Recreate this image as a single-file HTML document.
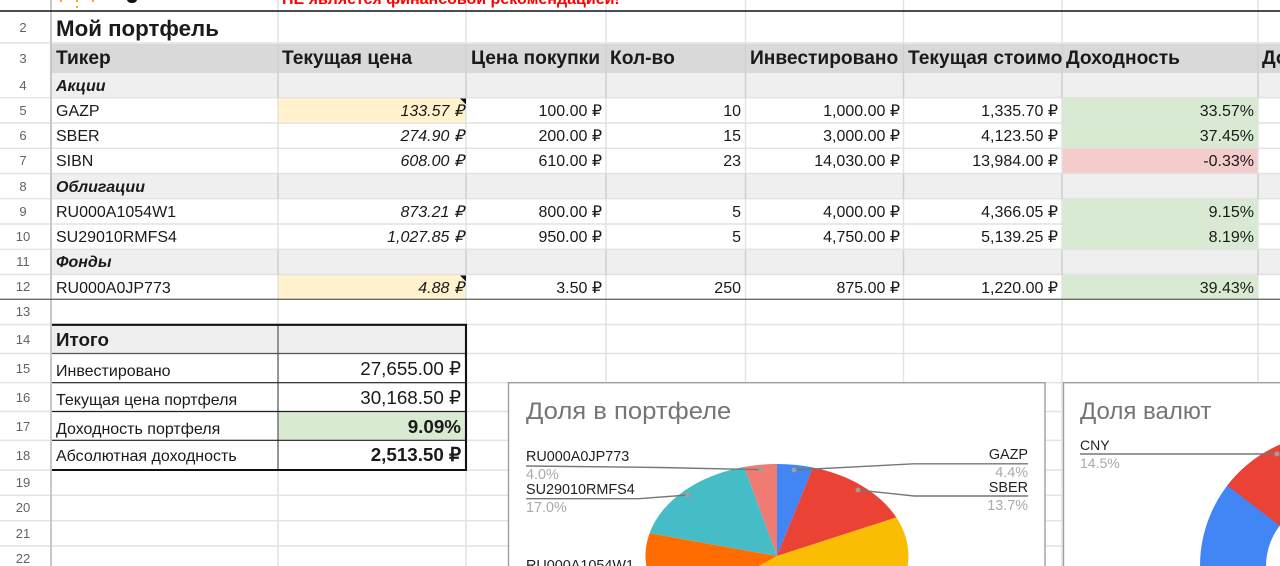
<!DOCTYPE html>
<html lang="ru"><head><meta charset="utf-8"><title>Мой портфель</title>
<style>
html,body{margin:0;padding:0;background:#fff;overflow:hidden}
#p{position:relative;width:1280px;height:566px;overflow:hidden;background:#fff;font-family:"Liberation Sans",sans-serif;color:#1a1a1a}
svg.bg{position:absolute;left:0;top:0}
.t,.r,.n{position:absolute;white-space:nowrap;font-size:16px;line-height:20px}
.r{text-align:right}
.i{font-style:italic}
.b{font-weight:bold}
.h{font-size:19.2px;font-weight:bold;line-height:24px;top:47px}
.n{font-size:13px;color:#5f6368;width:46px;left:0;text-align:center}
.c{font-size:14.4px;line-height:16px;color:#222}
.g{font-size:14.4px;line-height:16px;color:#aaa}
.s{font-size:18.8px;line-height:24px}
</style></head><body><div id="p">
<svg class="bg" width="1280" height="566" viewBox="0 0 1280 566" shape-rendering="auto">
<!-- fills -->
<rect x="52" y="44" width="1228" height="29" fill="#d9d9d9"/>
<rect x="52" y="73" width="1228" height="25" fill="#efefef"/>
<rect x="52" y="174" width="1228" height="25" fill="#efefef"/>
<rect x="52" y="250" width="1228" height="25" fill="#efefef"/>
<rect x="52" y="325" width="414" height="28" fill="#efefef"/>
<rect x="278" y="98" width="188" height="25" fill="#fff2cc"/>
<rect x="278" y="275" width="188" height="24" fill="#fff2cc"/>
<rect x="1062" y="98" width="196" height="50" fill="#d9ead3"/>
<rect x="1062" y="148" width="196" height="25" fill="#f4cccc"/>
<rect x="1062" y="199" width="196" height="50" fill="#d9ead3"/>
<rect x="1062" y="275" width="196" height="24" fill="#d9ead3"/>
<rect x="278" y="412" width="188" height="28" fill="#d9ead3"/>
<!-- grid horizontal -->
<g stroke="#e2e2e2" stroke-width="1.4">
<path d="M0 43H1280M0 97.7H1280M0 123H1280M0 148.3H1280M0 173.5H1280M0 198.7H1280M0 224H1280M0 249.3H1280M0 274.5H1280M0 324.5H1280M0 353.5H1280M0 382.7H1280M0 411.5H1280M0 440.3H1280M0 470H1280M0 495.3H1280M0 520.7H1280M0 546H1280"/>
</g>
<!-- grid vertical -->
<g stroke="#e2e2e2" stroke-width="1.4">
<path d="M278 0V566M466 0V566M606 0V566M745.5 0V566M903.5 0V566M1062 0V566M1258 0V566"/>
</g>
<g stroke="#cfcfcf" stroke-width="1.4"><path d="M278 44V98M466 44V98M606 44V98M745.5 44V98M903.5 44V98M1062 44V98M1258 44V98M278 174V199M466 174V199M606 174V199M745.5 174V199M903.5 174V199M1062 174V199M1258 174V199M278 250V275M466 250V275M606 250V275M745.5 250V275M903.5 250V275M1062 250V275M1258 250V275"/></g>
<path d="M51 0V566" stroke="#c8c8c8" stroke-width="2"/>
<path d="M0 11H1280" stroke="#111" stroke-width="1.5"/>
<path d="M0 299.3H1280" stroke="#6a6a6a" stroke-width="1.3"/>
<!-- totals table -->
<path d="M278 325V469" stroke="#777" stroke-width="1.5"/>
<path d="M52 353.5H466" stroke="#555" stroke-width="1.3"/>
<path d="M52 382.7H466M52 411.5H466M52 440.3H466" stroke="#222" stroke-width="1.2"/>
<path d="M52 324.8H466V470H52" fill="none" stroke="#111" stroke-width="2.1"/>
<!-- note triangles -->
<path d="M460 98.5H466V104.5Z" fill="#111"/><path d="M460 275.5H466V281.5Z" fill="#111"/>
<!-- top clipped logo -->
<g fill="#f9ab00"><rect x="60" y="0" width="2" height="2"/><rect x="76" y="0" width="2" height="2"/><rect x="76" y="6" width="2" height="2"/><rect x="92" y="0" width="2" height="2"/></g>
<path d="M127 0h10q-1 3-5 3t-5-3z" fill="#111"/>
<!-- chart 1 -->
<rect x="508.5" y="382.7" width="536.5" height="200" fill="#fff" stroke="#9e9e9e" stroke-width="1.4"/>
<path d="M777 556L777 464A131.5 92 0 0 1 812.9 467.5Z" fill="#4285f4"/>
<path d="M777 556L812.9 467.5A131.5 92 0 0 1 896.3 517.4Z" fill="#ea4335"/>
<path d="M777 556L896.3 517.4A131.5 92 0 0 1 673.6 612.9Z" fill="#fbbc04"/>
<path d="M777 556L673.6 612.9A131.5 92 0 0 1 649.6 533.1Z" fill="#ff6d01"/>
<path d="M777 556L649.6 533.1A131.5 92 0 0 1 744.3 466.9Z" fill="#46bdc6"/>
<path d="M777 556L744.3 466.9A131.5 92 0 0 1 777 464Z" fill="#f07b72"/>
<g fill="none" stroke="#777" stroke-width="1.4">
<path d="M794 470L914 463.8H1028"/>
<path d="M858 490L914 496H1028"/>
<path d="M526 466L660 467.5L761 469.7"/>
<path d="M526 498.7H639L688 495"/>
</g>
<!-- chart 2 -->
<rect x="1063.5" y="382.7" width="400" height="200" fill="#fff" stroke="#9e9e9e" stroke-width="1.4"/>
<circle cx="1332" cy="566" r="99" fill="none" stroke="#4285f4" stroke-width="66"/>
<path d="M1227.3 485.5A132 132 0 0 1 1332 434V500A66 66 0 0 0 1279.7 525.7Z" fill="#ea4335"/>
<path d="M1080 454H1277" fill="none" stroke="#777" stroke-width="1.4"/>
<g fill="#9e9e9e"><circle cx="794" cy="470" r="2.5"/><circle cx="858" cy="490" r="2.5"/><circle cx="761" cy="469.7" r="2.5"/><circle cx="688" cy="495" r="2.5"/><circle cx="1277" cy="454" r="2.5"/></g>
</svg>

<div class="t b" style="left:282px;top:-10px;color:#f00;font-size:16px">НЕ является финансовой рекомендацией!</div>

<div class="n" style="top:18px">2</div><div class="n" style="top:49px">3</div><div class="n" style="top:76px">4</div><div class="n" style="top:101px">5</div><div class="n" style="top:126px">6</div><div class="n" style="top:151px">7</div><div class="n" style="top:177px">8</div><div class="n" style="top:202px">9</div><div class="n" style="top:227px">10</div><div class="n" style="top:252px">11</div><div class="n" style="top:277px">12</div><div class="n" style="top:302px">13</div><div class="n" style="top:330px">14</div><div class="n" style="top:359px">15</div><div class="n" style="top:388px">16</div><div class="n" style="top:417px">17</div><div class="n" style="top:446px">18</div><div class="n" style="top:473px">19</div><div class="n" style="top:498px">20</div><div class="n" style="top:524px">21</div><div class="n" style="top:549px">22</div>

<div class="t b" style="left:56px;top:16px;font-size:22.3px;line-height:26px">Мой портфель</div>

<div class="t h" style="left:56px">Тикер</div>
<div class="t h" style="left:282px">Текущая цена</div>
<div class="t h" style="left:471px">Цена покупки</div>
<div class="t h" style="left:610px">Кол-во</div>
<div class="t h" style="left:750px">Инвестировано</div>
<div class="t h" style="left:908px;width:154px;overflow:hidden">Текущая стоимость</div>
<div class="t h" style="left:1066px">Доходность</div>
<div class="t h" style="left:1262px">Доля</div>

<div class="t i b" style="left:56px;top:77px">Акции</div>
<div class="t i b" style="left:56px;top:178px">Облигации</div>
<div class="t i b" style="left:56px;top:253px">Фонды</div>

<div class="t" style="left:56px;top:102px">GAZP</div>
<div class="t" style="left:56px;top:127px">SBER</div>
<div class="t" style="left:56px;top:152px">SIBN</div>
<div class="t" style="left:56px;top:203px">RU000A1054W1</div>
<div class="t" style="left:56px;top:228px">SU29010RMFS4</div>
<div class="t" style="left:56px;top:279px">RU000A0JP773</div>

<div class="r i" style="right:816px;top:102px">133.57 ₽</div>
<div class="r i" style="right:816px;top:127px">274.90 ₽</div>
<div class="r i" style="right:816px;top:152px">608.00 ₽</div>
<div class="r i" style="right:816px;top:203px">873.21 ₽</div>
<div class="r i" style="right:816px;top:228px">1,027.85 ₽</div>
<div class="r i" style="right:816px;top:279px">4.88 ₽</div>

<div class="r" style="right:678px;top:102px">100.00 ₽</div>
<div class="r" style="right:678px;top:127px">200.00 ₽</div>
<div class="r" style="right:678px;top:152px">610.00 ₽</div>
<div class="r" style="right:678px;top:203px">800.00 ₽</div>
<div class="r" style="right:678px;top:228px">950.00 ₽</div>
<div class="r" style="right:678px;top:279px">3.50 ₽</div>

<div class="r" style="right:539px;top:102px">10</div>
<div class="r" style="right:539px;top:127px">15</div>
<div class="r" style="right:539px;top:152px">23</div>
<div class="r" style="right:539px;top:203px">5</div>
<div class="r" style="right:539px;top:228px">5</div>
<div class="r" style="right:539px;top:279px">250</div>

<div class="r" style="right:380px;top:102px">1,000.00 ₽</div>
<div class="r" style="right:380px;top:127px">3,000.00 ₽</div>
<div class="r" style="right:380px;top:152px">14,030.00 ₽</div>
<div class="r" style="right:380px;top:203px">4,000.00 ₽</div>
<div class="r" style="right:380px;top:228px">4,750.00 ₽</div>
<div class="r" style="right:380px;top:279px">875.00 ₽</div>

<div class="r" style="right:222px;top:102px">1,335.70 ₽</div>
<div class="r" style="right:222px;top:127px">4,123.50 ₽</div>
<div class="r" style="right:222px;top:152px">13,984.00 ₽</div>
<div class="r" style="right:222px;top:203px">4,366.05 ₽</div>
<div class="r" style="right:222px;top:228px">5,139.25 ₽</div>
<div class="r" style="right:222px;top:279px">1,220.00 ₽</div>

<div class="r" style="right:26px;top:102px">33.57%</div>
<div class="r" style="right:26px;top:127px">37.45%</div>
<div class="r" style="right:26px;top:152px">-0.33%</div>
<div class="r" style="right:26px;top:203px">9.15%</div>
<div class="r" style="right:26px;top:228px">8.19%</div>
<div class="r" style="right:26px;top:279px">39.43%</div>

<div class="t b s" style="left:56px;top:328px">Итого</div>
<div class="t" style="left:56px;top:362px">Инвестировано</div>
<div class="t" style="left:56px;top:391px">Текущая цена портфеля</div>
<div class="t" style="left:56px;top:420px">Доходность портфеля</div>
<div class="t" style="left:56px;top:447px">Абсолютная доходность</div>
<div class="r s" style="right:819px;top:357px">27,655.00 ₽</div>
<div class="r s" style="right:819px;top:386px">30,168.50 ₽</div>
<div class="r s b" style="right:819px;top:415px">9.09%</div>
<div class="r s b" style="right:819px;top:443px">2,513.50 ₽</div>

<div class="t" style="left:526px;top:398px;font-size:24px;line-height:28px;color:#757575;transform:scaleX(1.068);transform-origin:0 0">Доля в портфеле</div>
<div class="t c" style="left:526px;top:449px">RU000A0JP773</div>
<div class="t g" style="left:526px;top:467px">4.0%</div>
<div class="t c" style="left:526px;top:482px">SU29010RMFS4</div>
<div class="t g" style="left:526px;top:500px">17.0%</div>
<div class="t c" style="left:526px;top:558px">RU000A1054W1</div>
<div class="r c" style="right:252px;top:447px">GAZP</div>
<div class="r g" style="right:252px;top:465px">4.4%</div>
<div class="r c" style="right:252px;top:480px">SBER</div>
<div class="r g" style="right:252px;top:498px">13.7%</div>
<div class="t" style="left:1080px;top:398px;font-size:24px;line-height:28px;color:#757575">Доля валют</div>
<div class="t c" style="left:1080px;top:437px;font-size:14px">CNY</div>
<div class="t g" style="left:1080px;top:455px;font-size:14px">14.5%</div>
</div></body></html>
